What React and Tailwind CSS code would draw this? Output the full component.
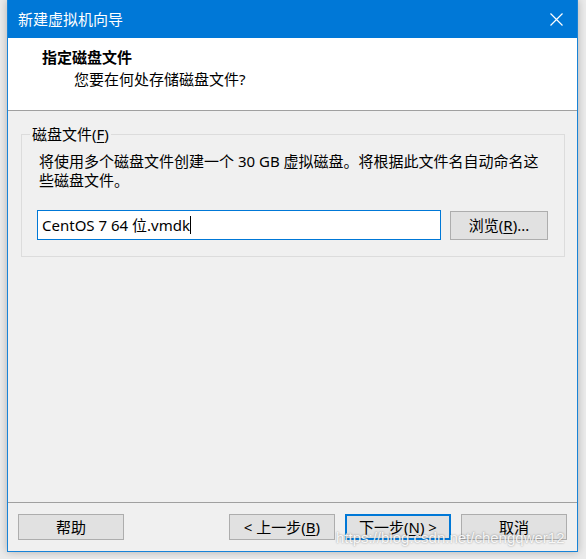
import React from "react";

const ui = { fontFamily: '"Noto Sans", "Noto Sans CJK SC", sans-serif' };

function Btn({ children, focused }) {
  return (
    <button
      className={`w-[106px] h-[26px] flex items-center justify-center bg-[#e1e1e1] text-[15px] leading-none text-black ${
        focused ? "border-2 border-[#0078d7]" : "border border-[#adadad]"
      }`}
    >
      {children}
    </button>
  );
}

export default function App() {
  return (
    <div className="relative w-[586px] h-[559px] bg-[#ebebeb] pl-[7px] pr-[8px] pb-[7px]" style={ui}>
      {/* Window */}
      <div className="h-[552px] flex flex-col bg-[#f0f0f0] border-x border-b border-[#1883d7] shadow-[0_0_8px_rgba(0,0,0,0.25)]">
        {/* Title bar */}
        <div className="h-[38px] shrink-0 bg-[#0078d7] flex items-center justify-between pl-[10px] pr-[14px]">
          <span className="text-white text-[15px] leading-5">新建虚拟机向导</span>
          <svg width="13" height="13" viewBox="0 0 13 13" className="text-white">
            <path d="M0.5 0.5L12.5 12.5M12.5 0.5L0.5 12.5" stroke="currentColor" strokeWidth="1.2" fill="none" />
          </svg>
        </div>

        {/* Header */}
        <div className="h-[72px] shrink-0 bg-white pt-[9px] pl-[34px]">
          <div className="text-[15px] leading-5 font-bold text-black">指定磁盘文件</div>
          <div className="text-[15px] leading-5 text-black pl-[32px] mt-[2px]">您要在何处存储磁盘文件?</div>
        </div>
        <div className="h-px shrink-0 bg-[#a0a0a0]" />

        {/* Body */}
        <div className="flex-1 pt-[23px] px-[13px]">
          <div className="relative h-[123px] w-[544px] border border-[#dcdcdc] pt-[17px] px-[15px]">
            <span className="absolute left-[8px] top-[-11px] px-[2px] bg-[#f0f0f0] text-[15px] leading-5 text-black">
              磁盘文件(<span className="underline underline-offset-2">F</span>)
            </span>
            <p className="pl-[2px] text-[15px] leading-[19px] text-black">
              将使用多个磁盘文件创建一个 30 GB 虚拟磁盘。将根据此文件名自动命名这
              <br />
              些磁盘文件。
            </p>
            <div className="mt-[20px] flex items-start gap-[9px]">
              <div className="w-[404px] h-[30px] bg-white border border-[#0078d7] flex items-center pl-[4px] text-[15px] text-black">
                <span>CentOS 7 64 位.vmdk</span>
                <span className="w-px h-[18px] bg-black" />
              </div>
              <button className="mt-px w-[98px] h-[29px] bg-[#e1e1e1] border border-[#adadad] flex items-center justify-center text-[15px] text-black">
                浏览(<span className="underline underline-offset-2">R</span>)...
              </button>
            </div>
          </div>
        </div>

        <div className="h-px shrink-0 bg-[#a0a0a0]" />
        {/* Footer */}
        <div className="h-[48px] shrink-0 flex items-start justify-between pt-[11px] px-[10px]">
          <Btn>帮助</Btn>
          <div className="flex gap-[10px]">
            <Btn>
              &lt; 上一步(<span className="underline underline-offset-2">B</span>)
            </Btn>
            <Btn focused>
              下一步(<span className="underline underline-offset-2">N</span>) &gt;
            </Btn>
            <Btn>取消</Btn>
          </div>
        </div>
      </div>

      {/* Watermark */}
      <span
        className="absolute left-[336px] top-[528px] text-[15px] leading-5 text-white/90 [text-shadow:0_0_2px_rgba(0,0,0,0.45)] pointer-events-none"
        style={{ fontFamily: '"Liberation Sans", Arial, sans-serif' }}
      >
        https://blog.csdn.net/chengqwer12
      </span>
    </div>
  );
}
